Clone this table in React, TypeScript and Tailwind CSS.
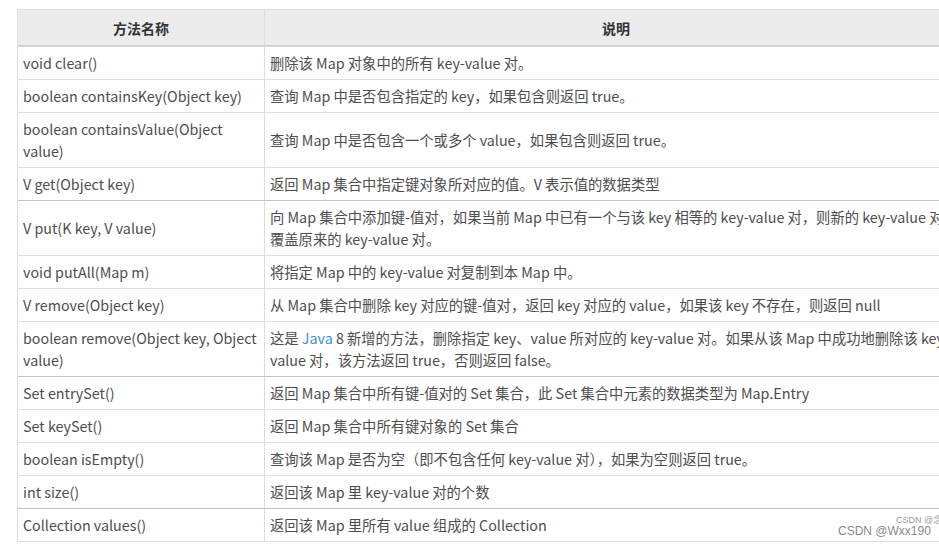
import React from "react";

type Row = { name: string[]; desc: React.ReactNode[]; thick?: boolean };

const rows: Row[] = [
  { name: ["void clear()"], desc: ["删除该 Map 对象中的所有 key-value 对。"] },
  { name: ["boolean containsKey(Object key)"], desc: ["查询 Map 中是否包含指定的 key，如果包含则返回 true。"] },
  { name: ["boolean containsValue(Object", "value)"], desc: ["查询 Map 中是否包含一个或多个 value，如果包含则返回 true。"] },
  { name: ["V get(Object key)"], desc: ["返回 Map 集合中指定键对象所对应的值。V 表示值的数据类型"], thick: true },
  {
    name: ["V put(K key, V value)"],
    desc: ["向 Map 集合中添加键-值对，如果当前 Map 中已有一个与该 key 相等的 key-value 对，则新的 key-value 对", "覆盖原来的 key-value 对。"],
  },
  { name: ["void putAll(Map m)"], desc: ["将指定 Map 中的 key-value 对复制到本 Map 中。"] },
  { name: ["V remove(Object key)"], desc: ["从 Map 集合中删除 key 对应的键-值对，返回 key 对应的 value，如果该 key 不存在，则返回 null"] },
  {
    name: ["boolean remove(Object key, Object", "value)"],
    desc: [
      <>
        这是 <span className="text-[#3b8fd6]">Java</span> 8 新增的方法，删除指定 key、value 所对应的 key-value 对。如果从该 Map 中成功地删除该 key-
      </>,
      "value 对，该方法返回 true，否则返回 false。",
    ],
    thick: true,
  },
  { name: ["Set entrySet()"], desc: ["返回 Map 集合中所有键-值对的 Set 集合，此 Set 集合中元素的数据类型为 Map.Entry"] },
  { name: ["Set keySet()"], desc: ["返回 Map 集合中所有键对象的 Set 集合"] },
  { name: ["boolean isEmpty()"], desc: ["查询该 Map 是否为空（即不包含任何 key-value 对），如果为空则返回 true。"] },
  { name: ["int size()"], desc: ["返回该 Map 里 key-value 对的个数"], thick: true },
  { name: ["Collection values()"], desc: ["返回该 Map 里所有 value 组成的 Collection"] },
];

export default function App() {
  return (
    <div
      className="relative w-[939px] h-[546px] overflow-hidden bg-white text-[14.3px] leading-[22px] text-[#4d4d4d]"
      style={{ fontFamily: '"Noto Sans CJK SC", "Noto Sans", sans-serif' }}
    >
      <div className="pt-[9px] pl-[17px]">
        <div className="w-[950px] border-l border-t border-[#e0e0e0]">
          <div className="flex h-[37px] bg-[#ececec] border-b-2 border-[#d4d4d4] font-bold text-[#333] text-[14px]">
            <div className="w-[247px] shrink-0 flex items-center justify-center border-r border-[#dcdcdc]">方法名称</div>
            <div className="flex-1 flex items-center justify-center">
              <span>说明</span>
            </div>
          </div>
          {rows.map((r, i) => (
            <div
              key={i}
              className={"flex border-b " + (r.thick ? "border-[#c4c4c4]" : "border-[#dedede]")}
            >
              <div className="w-[247px] shrink-0 py-[5px] pl-[5px] pr-[4px] border-r border-[#dcdcdc] flex flex-col justify-center">
                {r.name.map((t, j) => (
                  <div key={j} className="whitespace-nowrap">{t}</div>
                ))}
              </div>
              <div className="flex-1 py-[5px] pl-[5px] flex flex-col justify-center">
                {r.desc.map((t, j) => (
                  <div key={j} className="whitespace-nowrap">{t}</div>
                ))}
              </div>
            </div>
          ))}
        </div>
      </div>
      <div
        className="absolute left-[838px] top-[525px] text-[12px] leading-[13px] text-[#8a8a8a]"
        style={{ fontFamily: '"Liberation Sans", Arial, sans-serif' }}
      >
        CSDN @Wxx190
      </div>
      <div
        className="absolute left-[896px] top-[516px] text-[9px] leading-[9px] text-[#9a9a9a] whitespace-nowrap"
        style={{ fontFamily: '"Liberation Sans", "Noto Sans CJK SC", sans-serif' }}
      >
        CSDN @念
      </div>
    </div>
  );
}
